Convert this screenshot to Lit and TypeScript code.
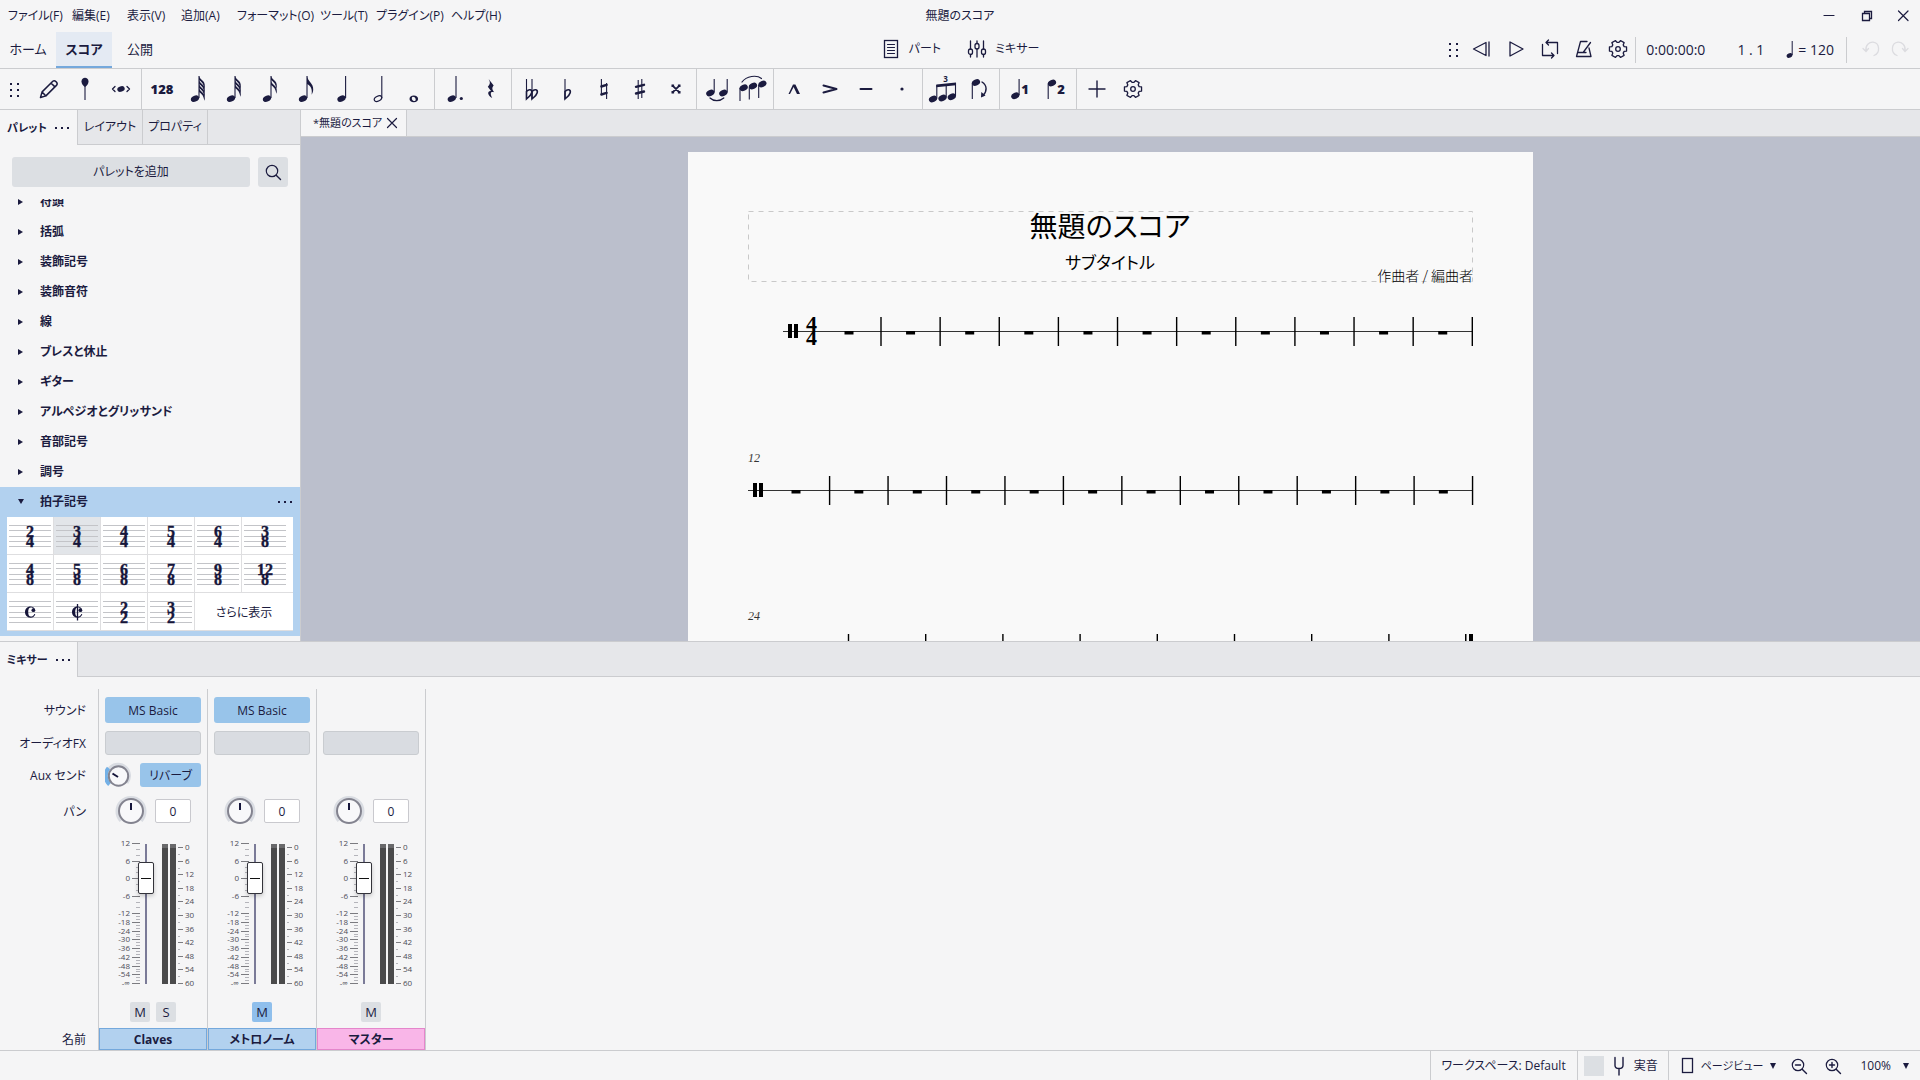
import { LitElement, html, svg, css, nothing } from "lit";
import { customElement } from "lit/decorators.js";
import { classMap } from "lit/directives/class-map.js";

const icon = (body: unknown, size = 32, view = size) =>
  html`<svg class="icon" width=${size} height=${size} viewBox="0 0 ${view} ${view}" aria-hidden="true">${body}</svg>`;

const head = (x: number, y: number) =>
  svg`<ellipse cx=${x} cy=${y} rx="4.3" ry="3" transform="rotate(-25 ${x} ${y})" fill="currentColor"/>`;
const stem = (x: number, y1: number, y2: number) =>
  svg`<path d="M${x} ${y1}V${y2}" stroke="currentColor" stroke-width="1.1"/>`;
const line = (d: string, w = 1.3) =>
  svg`<path d=${d} fill="none" stroke="currentColor" stroke-width=${w} stroke-linejoin="round" stroke-linecap="round"/>`;
const fill = (d: string) => svg`<path d=${d} fill="currentColor"/>`;

const flagged = (count: number) => svg`${head(13, 25.6)}${stem(17, 3, 25)}${
  count === 1
    ? fill("M17 3c.6 5 6.6 7.500 6.200 13.500c0 2-.6 3.600-1.600 5.200c.9-5.600-.6-8.700-4.600-10.700z")
    : Array.from({ length: count }, (_, i) => {
        const y = 3 + i * (count === 2 ? 5 : 4);
        return fill(`M17 ${y}c1 3.800 6.400 4.400 5.800 10.500c-.1 1-.3 1.600-.6 2.200c-.3-4.600-2.400-6.700-5.200-8.700z`);
      })
}`;

const gearPath = (() => {
  const teeth = 6;
  const points: string[] = [];
  for (let i = 0; i < teeth; i++) {
    const a = (i / teeth) * Math.PI * 2;
    for (const [da, r] of [[-0.38, 6.6], [-0.24, 8.8], [0.24, 8.8], [0.38, 6.6]]) {
      points.push(`${(10 + Math.cos(a + da) * r).toFixed(2)} ${(10 + Math.sin(a + da) * r).toFixed(2)}`);
    }
  }
  return `M${points.join("L")}Z`;
})();
const gear = () => icon(svg`${line(gearPath, 1.3)}<circle cx="10" cy="10" r="2.300" fill="none" stroke="currentColor" stroke-width="1.3"/>`, 20);

const dots = () =>
  icon(svg`${[3, 10].flatMap((x) => [2, 8, 14].map((y) => svg`<rect x=${x} y=${y} width="2" height="2" fill="currentColor"/>`))}`, 16);

const more = () => html`<svg class="more" width="16" height="4" viewBox="0 0 16 4" aria-hidden="true">
  <path d="M1 1h2v2H1zM7 1h2v2H7zM13 1h2v2h-2z" fill="currentColor"/></svg>`;

const flat = (x: number) => svg`${stem(x, 6, 26)}<path d="M${x} 18.500c2.500-3 6-2 5.200 1.300c-.6 2.500-3 4.200-5.200 6.200z" fill="none" stroke="currentColor" stroke-width="1.600"/>`;
const digit = (t: string, x: number) => svg`<text class="digit" x=${x} y="21" text-anchor="middle">${t}</text>`;

type Tool = [string, unknown];
const noteTools: Tool[][] = [
  [
    ["音符入力", svg`${line("M7.500 24.500l1.600-5.600L19.800 8.200c2-1.700 5.500 1.700 3.900 3.900L12.900 22.900zM18 10l3.900 3.900M9.100 18.900l3.800 4M11 17l7-7", 1.5)}`],
    ["音高", svg`${fill("M12.500 8.500c0-5 7-5 7 0c0 2.500-1.700 4.500-3.500 5.500c-1.800-1-3.500-3-3.500-5.500z")}${stem(16, 12, 27)}`],
    ["間隔", svg`<ellipse cx="16" cy="16" rx="3.800" ry="2.700" transform="rotate(-20 16 16)" fill="currentColor"/>${line("M10 13.500L7.500 16l2.500 2.500M22 13.500l2.500 2.500l-2.500 2.500", 1.3)}`],
  ],
  [
    ["128分音符", svg`<text class="digit" x="16" y="21" text-anchor="middle">128</text>`],
    ["64分音符", flagged(4)],
    ["32分音符", flagged(3)],
    ["16分音符", flagged(2)],
    ["8分音符", flagged(1)],
    ["4分音符", svg`${head(15.5, 25.6)}${stem(19.6, 3, 25)}`],
    ["2分音符", svg`<ellipse cx="16" cy="25.600" rx="4" ry="2.400" transform="rotate(-28 16 25.600)" fill="none" stroke="currentColor" stroke-width="1.2"/>${stem(19.8, 3, 25)}`],
    ["全音符", svg`<path fill-rule="evenodd" fill="currentColor" d="M15.800 22.600c2.600 0 4.300 1.500 4.300 3.300s-1.700 3.300-4.300 3.300s-4.300-1.500-4.300-3.300s1.700-3.300 4.300-3.300zM14.900 23.700c-2 .5-1 4.400 1.800 4.400c2-.5 1-4.400-1.800-4.400z"/>`],
  ],
  [
    ["付点", svg`${head(12.8, 25.6)}${stem(17, 3, 25)}<circle cx="22.300" cy="25.500" r="1.600" fill="currentColor"/>`],
    ["休符", fill("M13.600 6L18.700 12.400C16.700 14.800 17 16 19.200 19.300C15.800 18.300 14.600 20 17.200 25C12 22 12.200 17.600 16 17.900L12.800 13.800C15.400 11 15.400 9.300 13.600 6Z")],
  ],
  [
    ["ダブルフラット", svg`${flat(10.5)}${flat(16)}`],
    ["フラット", flat(13)],
    ["ナチュラル", svg`${stem(13.4, 6, 22)}${stem(18.6, 10, 26)}${line("M13.400 13.500l5.200-1.600M13.400 21.500l5.200-1.600", 2.4)}`],
    ["シャープ", svg`${stem(14.2, 7, 26)}${stem(17.8, 6, 25)}${line("M12 13.800l8-2M12 20.500l8-2", 2.4)}`],
    ["ダブルシャープ", svg`${line("M12.800 12.800l6.400 6.400M19.200 12.800l-6.400 6.400", 1.8)}${fill("M11.500 11.500h2.600v2.600h-2.600zM17.900 11.500h2.600v2.600h-2.600zM11.500 17.900h2.600v2.600h-2.600zM17.900 17.900h2.600v2.600h-2.600z")}`],
  ],
  [
    ["タイ", svg`${head(9.3, 20)}${head(22.3, 20)}${stem(13.2, 6, 19.5)}${stem(26.2, 6, 19.500)}${line("M9 25c3.500 3.500 10 3.500 13.800 0", 1.2)}`],
    ["スラー", svg`${head(6.7, 14.8)}${head(16, 13)}${head(25.4, 11)}${stem(3, 15, 28)}${stem(12.300, 14, 26.5)}${stem(21.7, 12, 25)}${line("M5 9c4.500-6 14.500-7.500 19.500-3.500", 1.2)}`],
  ],
  [
    ["マルカート", fill("M10.500 21L15 11.500h2.400L22 21h-3L15.600 14L12 21z")],
    ["アクセント", line("M9.500 12.500L22.500 16L9.500 19.500", 2)],
    ["テヌート", line("M10.500 16h11", 2)],
    ["スタッカート", svg`<circle cx="16" cy="16" r="1.600" fill="currentColor"/>`],
  ],
  [
    ["連符", svg`${head(6, 26)}${head(15.5, 25)}${head(24.8, 23.8)}${stem(9.8, 12, 25.5)}${stem(19.200, 11, 24.5)}${stem(28.500, 10, 23)}${fill("M9.300 11.500L29 9.500v2.800L9.300 14.300z")}<text class="mini" x="18.500" y="8.500" text-anchor="middle">3</text>`],
    ["符幹を反転", svg`${head(13, 9.5)}${stem(9.3, 10, 26)}${line("M19 9c5 3 5.500 9 1 13.500", 1.4)}${fill("M18 24.500l.3-5.500l4.200 3.500z")}`],
  ],
  [
    ["声部1", svg`${head(11.3, 22.8)}${stem(15.1, 6, 22)}${digit("1", 21)}`],
    ["声部2", svg`${head(12, 10)}${stem(8.2, 10.5, 26)}${digit("2", 21)}`],
  ],
];

const topMenus = ["ファイル(F)", "編集(E)", "表示(V)", "追加(A)", "フォーマット(O)", "ツール(T)", "プラグイン(P)", "ヘルプ(H)"];
const palettes = ["符頭", "括弧", "装飾記号", "装飾音符", "線", "ブレスと休止", "ギター", "アルペジオとグリッサンド", "音部記号", "調号"];
const signatures: [string, string][] = [
  ["2", "4"], ["3", "4"], ["4", "4"], ["5", "4"], ["6", "4"], ["3", "8"],
  ["4", "8"], ["5", "8"], ["6", "8"], ["7", "8"], ["9", "8"], ["12", "8"],
  ["C", ""], ["¢", ""], ["2", "2"], ["3", "2"],
];

const signatureCell = ([top, bottom]: [string, string]) => html`
  <svg class="staff" width="46" height="37" viewBox="0 0 46 37" aria-hidden="true">
    ${[8.5, 13.5, 19.500, 24.5, 29.5].map((y) => svg`<path d="M2 ${y}h42" stroke="#c3c4c8"/>`)}
    ${bottom
      ? svg`<text class="sig" x="23" y="19.500" text-anchor="middle">${top}</text><text class="sig" x="23" y="30" text-anchor="middle">${bottom}</text>`
      : svg`<path d="M28 17.300c0-2.300-2.200-3.800-4.500-3.800c-3.500 0-5.500 2.600-5.500 5.600s2 5.600 5.500 5.600c2.600 0 4.300-1.600 4.800-3.700h-.9c-.6 1.500-1.700 2.600-3.500 2.600c-1.800 0-2.700-1.400-2.700-4.500s.9-4.500 2.700-4.500c.8 0 1.400.1 1.900.5z" fill="#15153a"/><circle cx="26.400" cy="17.200" r="1.900" fill="#15153a"/>${top === "¢" ? svg`<path d="M23.500 11v16.500" stroke="#15153a" stroke-width="1.3"/>` : nothing}`}
  </svg>`;

type Strip = { name: string; sound: string; aux: boolean; mute: boolean; solo: boolean; master?: boolean };
const strips: Strip[] = [
  { name: "Claves", sound: "MS Basic", aux: true, mute: false, solo: true },
  { name: "メトロノーム", sound: "MS Basic", aux: false, mute: true, solo: false },
  { name: "マスター", sound: "", aux: false, mute: false, solo: false, master: true },
];

const gainMarks: [string, number][] = [
  ["12", 16], ["6", 34], ["0", 51], ["-6", 69], ["-12", 86], ["-18", 95], ["-24", 104],
  ["-30", 112], ["-36", 121], ["-42", 130], ["-48", 139], ["-54", 147], ["-∞", 156],
];
const gainScale = () => html`<svg class="gain" width="42" height="173" viewBox="0 0 42 173" aria-hidden="true">
  ${gainMarks.map(([label, y], i) => {
    const next = gainMarks[i + 1];
    return svg`<text class="mark" x="31" y=${y + 3} text-anchor="end">${label}</text>
      <path d="M33 ${y + 0.5}h8" stroke="#7b7b80"/>
      ${next ? [1, 2].map((n) => svg`<path d="M37 ${Math.round(y + ((next[1] - y) * n) / 3) + 0.5}h4" stroke="#b4b4ba"/>`) : nothing}`;
  })}
</svg>`;
const levelScale = () => html`<svg class="level" width="45" height="173" viewBox="0 0 45 173" aria-hidden="true">
  <path d="M1 17h6v140H1zM9 17h6v140H9z" fill="#4a4a4b"/>
  <path d="M1 17h6v4H1zM9 17h6v4H9z" fill="#69696b"/>
  ${Array.from({ length: 11 }, (_, i) => {
    const y = Math.round(20 + i * 13.6);
    return svg`<path d="M17 ${y + 0.5}h5" stroke="#7b7b80"/><text class="mark" x="24" y=${y + 3}>${i * 6}</text>
      ${i < 10 ? svg`<path d="M17 ${y + 7.5}h2" stroke="#b4b4ba"/>` : nothing}`;
  })}
</svg>`;

const panKnob = () => html`<svg width="32" height="32" viewBox="0 0 32 32" aria-hidden="true">
  <path d="M5.800 26A14 14 0 1 1 26.200 26" fill="none" stroke="#d9dce2" stroke-width="3"/>
  <circle cx="16" cy="16" r="12" fill="#f8f8fa" stroke="#83838f" stroke-width="2"/>
  <path d="M16 8v7" stroke="#15153a" stroke-width="2"/></svg>`;
const auxKnob = () => html`<svg width="26" height="26" viewBox="0 0 26 26" aria-hidden="true">
  <path d="M4 21A11.500 11.500 0 1 1 22 21" fill="none" stroke="#d9dce2" stroke-width="3"/>
  <path d="M4.500 22.500A12 12 0 0 1 3.500 6" fill="none" stroke="#73b0e6" stroke-width="4"/>
  <circle cx="13.500" cy="14" r="9.700" fill="#f8f8fa" stroke="#83838f" stroke-width="2"/>
  <path d="M7.500 11.500l5.500 3.500" stroke="#15153a" stroke-width="2"/></svg>`;

@customElement("score-page")
export class ScorePage extends LitElement {
  static styles = css`
    :host { display: block; flex: none; background: #f9f9f9; width: 845px; }
    svg { display: block; }
    text { fill: #000; font-family: "Noto Sans CJK JP", sans-serif; font-feature-settings: "palt"; }
    .title { font-size: 28px; }
    .subtitle { font-size: 17px; }
    .composer { font-size: 14px; font-weight: 300; }
    .measure { font: italic 12px "Liberation Serif", serif; fill: #333; }
    .time { font: bold 22px "Liberation Serif", serif; }
  `;

  private system(y: number, start: number, first: number, step: number, count: number, firstRest: number) {
    return svg`
      <path d="M${start} ${y + 0.5}H785" stroke="#333"/>
      <path d="M${start + 5} ${y - 7}h4v14h-4zM${start + 11} ${y - 7}h4v14h-4z"/>
      ${Array.from({ length: count }, (_, i) => {
        const x = first + i * step;
        return svg`<rect x=${x - 0.7} y=${y - 14} width="1.400" height="29"/>
          <rect x=${(i ? x - step / 2 : firstRest) - 4.5} y=${y} width="9" height="3.500"/>`;
      })}`;
  }

  render() {
    return html`<svg width="845" height="489" viewBox="0 0 845 489">
      <rect x="60.500" y="59.500" width="724" height="70" fill="none" stroke="#c9c9c9" stroke-dasharray="5 5"/>
      <text class="title" x="422" y="85" text-anchor="middle">無題のスコア</text>
      <text class="subtitle" x="422" y="117" text-anchor="middle">サブタイトル</text>
      <text class="composer" x="785" y="129" text-anchor="end">作曲者 / 編曲者</text>
      ${this.system(179, 95, 193, 59.13, 11, 161)}
      <text class="time" x="123.500" y="179" text-anchor="middle">4</text>
      <text class="time" x="123.500" y="193" text-anchor="middle">4</text>
      <text class="measure" x="60" y="310">12</text>
      ${this.system(338, 60, 141.6, 58.45, 12, 108)}
      <text class="measure" x="60" y="468">24</text>
      ${Array.from({ length: 8 }, (_, i) => svg`<rect x=${159.8 + i * 77.2} y="482" width="1.400" height="28"/>`)}
      <path d="M777 482h1.500v28h-1.500zM781 482h4v28h-4z"/>
    </svg>`;
  }
}

@customElement("app-root")
export class AppRoot extends LitElement {
  static styles = css`
    :host {
      display: flex; flex-direction: column; height: 100vh; overflow: hidden;
      background: #f5f5f6; color: #1b1b3f;
      font: 12px/18px "Open Sans", "Noto Sans CJK JP", sans-serif;
      font-feature-settings: "palt";
    }
    * { box-sizing: border-box; }
    button, input { font: inherit; color: inherit; margin: 0; padding: 0; border: 0; background: none; font-feature-settings: inherit; }
    button { display: flex; align-items: center; justify-content: center; white-space: nowrap; }
    svg { display: block; flex: none; }
    a { color: inherit; text-decoration: none; }

    .titlebar { display: grid; grid-template-columns: 1fr auto 1fr; height: 32px; align-items: center; }
    .menus { display: grid; grid-template-columns: 64px 55px 54px 56px 83px 56px 75px auto; justify-content: start; padding-left: 8px; }
    .menus button { justify-content: flex-start; }
    .window { display: flex; justify-content: flex-end; }
    .window button { width: 38px; height: 30px; }
    .window button:last-child { width: 34px; }

    .mainbar { display: grid; grid-template-columns: 1fr auto 1fr; height: 37px; border-bottom: 1px solid #cbcccf; align-items: stretch; }
    .pages, .views, .transport { display: flex; align-items: center; }
    .pages a { display: flex; width: 56px; height: 36px; align-items: center; justify-content: center; font-size: 13px; padding-bottom: 2px; }
    .pages .current { background: #e4eaf3; border-bottom: 2px solid #74a8dc; padding: 0; font-weight: 700; }
    .views { gap: 26px; padding-bottom: 2px; }
    .views button { gap: 8px; }
    .transport { justify-content: flex-end; font-size: 14px; }
    .transport .icon { margin-bottom: 2px; }
    .transport > .icon { margin-right: 3px; }
    .transport button { width: 34px; height: 32px; }
    .transport .undo button { width: 29px; }
    .undo { display: flex; color: #dcdce0; padding: 0 6px 0 9px; }
    .rule { width: 1px; height: 26px; background: #cbcccf; }
    .time { margin: 0 32px 0 10px; }
    .beat { margin-right: 22px; }
    .tempo { display: flex; align-items: center; gap: 3px; margin-right: 12px; }

    .notebar { display: flex; height: 41px; border-bottom: 1px solid #cbcccf; align-items: stretch; }
    .grip { display: flex; width: 29px; align-items: center; justify-content: center; }
    .group { display: flex; align-items: center; padding: 0 2px; border-right: 1px solid #cbcccf; }
    .group:last-child { border-right: 0; }
    .group button { width: 36px; height: 36px; }
    .digit { font: 800 13px "Open Sans", sans-serif; fill: currentColor; }
    .mini { font: 700 8px "Open Sans", sans-serif; fill: currentColor; }
    .icon { overflow: visible; }

    .work { display: flex; flex: 1; min-height: 0; }
    .side { display: flex; flex-direction: column; width: 301px; border-right: 1px solid #cbcccf; flex: none; }
    .tabs { display: flex; height: 35px; background: #e6e7ea; flex: none; }
    .tabs button { width: 65px; border-right: 1px solid #cbcccf; border-bottom: 1px solid #cbcccf; }
    .tabs .active { width: 78px; gap: 7px; background: #f5f5f6; border-bottom: 0; font-weight: 700; font-size: 11px; }
    .tabs .rest { flex: 1; border-bottom: 1px solid #cbcccf; }
    .finder { display: flex; gap: 8px; padding: 12px; height: 54px; flex: none; }
    .finder button { height: 30px; background: #dcdfe3; border-radius: 3px; }
    .finder .add { flex: 1; }
    .finder .search { width: 30px; }
    .list { display: flex; flex-direction: column; justify-content: flex-end; flex: 1; min-height: 0; overflow: hidden; padding-bottom: 5px; }
    .list > * { flex: none; }
    .palette { display: flex; width: 100%; height: 30px; justify-content: flex-start; padding: 0 8px 0 18px; gap: 17px; font-weight: 700; }
    .palette .more { margin-left: auto; }
    .open { background: #b2d1ef; padding: 0 7px 5px 7px; }
    .open .palette { padding: 0 0 0 11px; }
    .cells { display: grid; grid-template-columns: repeat(5, 47px) 1fr; background: #fff; }
    .cells button { height: 38px; justify-content: flex-start; border-right: 1px solid #dedee0; border-bottom: 1px solid #dedee0; }
    .cells button:nth-child(6n) { border-right: 0; }
    .cells .picked { background: #e2e5e9; }
    .cells .show { grid-column: span 2; justify-content: center; border-right: 0; padding-top: 3px; }
    .sig { font: bold 16px "Liberation Serif", serif; fill: #15153a; stroke: #15153a; stroke-width: 0.4; }

    .main { display: flex; flex-direction: column; flex: 1; min-width: 0; }
    .docs { display: flex; height: 27px; background: #e6e7ea; border-bottom: 1px solid #cbcccf; flex: none; }
    .doc { display: flex; align-items: center; gap: 2px; padding: 0 6px 0 12px; background: #f5f5f6; border-right: 1px solid #cbcccf; font-size: 11px; }
    .canvas { display: flex; justify-content: center; flex: 1; min-height: 0; overflow: hidden; padding-top: 15px; background: #bbbfcc; }

    .mixer { flex: none; border-top: 1px solid #cbcccf; }
    .strips { display: flex; padding-top: 12px; }
    .strip { display: grid; grid-template-rows: 42px 24px 40px 32px 173px 28px 22px; width: 109px; border-left: 1px solid #cbcccf; }
    .strip:last-child { width: 110px; border-right: 1px solid #cbcccf; }
    .heads { width: 98px; border: 0; text-align: right; padding-right: 12px; align-items: center; }
    .heads span { padding-top: 2px; }
    .heads .last { grid-row: 7; }
    .cell { display: flex; align-items: center; justify-content: space-between; padding: 0 6px; min-width: 0; }
    .cell.end { align-items: flex-start; justify-content: center; gap: 6px; padding-top: 2px; }
    .sound { width: 100%; height: 26px; background: #98c4ea; border-radius: 3px; padding-top: 2px; }
    .fx { width: 100%; height: 24px; background: #d9dce1; border: 1px solid #c9ccd0; border-radius: 3px; }
    .aux { width: 61px; height: 24px; background: #98c4ea; border-radius: 3px; padding-top: 2px; }
    .knob { position: relative; display: block; }
    .knob input { position: absolute; inset: 0; width: 100%; height: 100%; opacity: 0; }
    .cell.pan { justify-content: center; gap: 8px; padding: 0 14px; }
    .value { width: 36px; height: 24px; background: #fff; border: 1px solid #c9c9ce; border-radius: 2px; text-align: center; }
    .faders { display: flex; min-width: 0; }
    .fader {
      appearance: none; writing-mode: vertical-lr; direction: rtl; width: 16px; height: 173px; margin: 0 7px 0 -3px; flex: none;
      background: linear-gradient(#7b7b98, #7b7b98) center / 2px 140px no-repeat;
    }
    .fader::-webkit-slider-thumb {
      appearance: none; width: 16px; height: 32px; border: 1px solid #33333a; border-radius: 2px; box-shadow: 0 2px 4px #0003;
      background: linear-gradient(#111, #111) center / 10px 1px no-repeat, #fff;
    }
    .mark { font: 8px "Open Sans", sans-serif; fill: #4c4c56; }
    .toggle { width: 20px; height: 20px; background: #dcdfe3; border-radius: 2px; font-size: 13px; }
    .toggle.on { background: #8fbfec; }
    .name { display: flex; align-items: center; justify-content: center; background: #b2d1ef; border: 1px solid #74a8dc; font-weight: 700; padding-top: 2px; }
    .name.master { background: #f9b6e8; border-color: #e486cb; }

    .status { display: flex; height: 30px; justify-content: flex-end; align-items: stretch; border-top: 1px solid #cbcccf; flex: none; }
    .part { display: flex; align-items: center; border-left: 1px solid #cbcccf; }
    .workspace { padding: 0 11px; }
    .pitch { gap: 9px; padding: 0 10px 0 6px; }
    .swatch { width: 20px; height: 20px; background: #dcdfe3; }
    .zoomers { padding-left: 12px; }
    .zoomers button { height: 28px; }
    .view { gap: 6px; margin-right: 5px; font-size: 11px; }
    .zoom { width: 34px; }
    .percent { gap: 11px; padding: 0 10px; }
  `;

  private down() {
    return html`<svg width="8" height="6" viewBox="0 0 8 6" aria-hidden="true"><path d="M1 0h6L4 6z" fill="currentColor"/></svg>`;
  }

  private titlebar() {
    return html`<header class="titlebar">
      <nav class="menus">${topMenus.map((m) => html`<button>${m}</button>`)}</nav>
      <span>無題のスコア</span>
      <div class="window">
        <button aria-label="最小化">${icon(line("M3 7.500h10", 1.2), 16)}</button>
        <button aria-label="元に戻す">${icon(svg`<path d="M3.500 5.500h7v7h-7zM5.500 5.500v-2h7v7h-2" fill="none" stroke="currentColor" stroke-width="1.300"/>`, 16)}</button>
        <button aria-label="閉じる">${icon(line("M3.500 3l9.500 9.500M13 3L3.500 12.500", 1.2), 16)}</button>
      </div>
    </header>`;
  }

  private mainbar() {
    return html`<div class="mainbar">
      <nav class="pages"><a href="#home">ホーム</a><a class="current" href="#score">スコア</a><a href="#publish">公開</a></nav>
      <div class="views">
        <button>${icon(svg`<rect x="3.500" y="1.500" width="13" height="17" fill="none" stroke="currentColor" stroke-width="1.300"/>${line("M6.500 5.500h7M6.500 8.500h7M6.500 11.500h7M6.500 14.500h7", 1.2)}`, 20)}パート</button>
        <button>${icon(svg`${line("M3.500 2v8M3.500 15.500V18M10 2v2.500M10 10v8M16.500 2v8M16.500 15.500V18", 1.3)}<rect x="1.500" y="10" width="4" height="5.500" rx="2" fill="none" stroke="currentColor" stroke-width="1.300"/><rect x="8" y="4.500" width="4" height="5.500" rx="2" fill="none" stroke="currentColor" stroke-width="1.300"/><rect x="14.500" y="10" width="4" height="5.500" rx="2" fill="none" stroke="currentColor" stroke-width="1.300"/>`, 20)}ミキサー</button>
      </div>
      <div class="transport">
        ${dots()}
        <button aria-label="先頭に戻る">${icon(line("M14 3.500v13L1.500 10zM17 3v14"), 20)}</button>
        <button aria-label="再生">${icon(line("M4 3l13 7L4 17z"), 20)}</button>
        <button aria-label="ループ">${icon(line("M6 3.500H17.500V14.500M14 16.500H2.500V5.500M8.500 1L6 3.500L8.500 6M11.500 14l2.500 2.500L11.500 19"), 20)}</button>
        <button aria-label="メトロノーム">${icon(line("M13 2.500H6.500L2.500 17.500h14.500L15 9M9.500 13L16.500 3.500M4 13.500h8"), 20)}</button>
        <button aria-label="再生設定">${gear()}</button>
        <span class="rule"></span>
        <span class="time">0:00:00:0</span>
        <span class="beat">1 . 1</span>
        <span class="tempo"><svg width="9" height="20" viewBox="0 0 9 20" aria-hidden="true"><ellipse cx="3.500" cy="15.500" rx="3" ry="2.200" transform="rotate(-25 3.500 15.500)" fill="currentColor"/><path d="M6.200 1v14" stroke="currentColor"/></svg>= 120</span>
        <span class="rule"></span>
        <div class="undo">
          <button aria-label="元に戻す" disabled>${icon(line("M2 9.500l3 3l2.500-3M5 12C4 6 8.500 3 12 3.200C19 4 19.500 14 13 16.500"), 20)}</button>
          <button aria-label="やり直す" disabled>${icon(line("M18 9.500l-3 3l-2.500-3M15 12C16 6 11.500 3 8 3.200C1 4 .5 14 7 16.500"), 20)}</button>
        </div>
      </div>
    </div>`;
  }

  private notebar() {
    return html`<div class="notebar" role="toolbar">
      <span class="grip">${dots()}</span>
      ${noteTools.map((group) => html`<div class="group">${group.map(([label, art]) => html`<button aria-label=${label}>${icon(art)}</button>`)}</div>`)}
      <div class="group">
        <button aria-label="追加">${icon(line("M16 8v16M8 16h16", 1.4))}</button>
        <button aria-label="ツールバー設定">${gear()}</button>
      </div>
    </div>`;
  }

  private side() {
    return html`<aside class="side">
      <div class="tabs">
        <button class="active">パレット${more()}</button><button>レイアウト</button><button>プロパティ</button><span class="rest"></span>
      </div>
      <div class="finder">
        <button class="add">パレットを追加</button>
        <button class="search" aria-label="検索">${icon(svg`<circle cx="7" cy="7" r="5.700" fill="none" stroke="currentColor" stroke-width="1.200"/>${line("M11.200 11.200L15.500 15.500", 1.4)}`, 16)}</button>
      </div>
      <div class="list">
        ${palettes.map((p) => html`<button class="palette"><svg width="5" height="6" viewBox="0 0 5 6" aria-hidden="true"><path d="M0 0v6l5-3z" fill="currentColor"/></svg>${p}</button>`)}
        <section class="open">
          <button class="palette"><svg width="5" height="6" viewBox="0 0 5 6" overflow="visible" aria-hidden="true"><path d="M0 0h6L3 5z" fill="currentColor"/></svg>拍子記号${more()}</button>
          <div class="cells">
            ${signatures.map((s, i) => html`<button class=${classMap({ picked: i === 1 })} aria-label=${s[1] ? `${s[0]}/${s[1]}` : s[0]}>${signatureCell(s)}</button>`)}
            <button class="show">さらに表示</button>
          </div>
        </section>
      </div>
    </aside>`;
  }

  private strip(s: Strip) {
    return html`<section class="strip">
      <div class="cell">${s.sound ? html`<button class="sound">${s.sound}</button>` : nothing}</div>
      <div class="cell"><button class="fx" aria-label="オーディオFX"></button></div>
      <div class="cell">${s.aux
        ? html`<label class="knob">${auxKnob()}<input type="range" aria-label="リバーブ量" value="25"></label><button class="aux">リバーブ</button>`
        : nothing}</div>
      <div class="cell pan">
        <label class="knob">${panKnob()}<input type="range" aria-label="パン" min="-100" value="0"></label>
        <input class="value" aria-label="パンの値" value="0">
      </div>
      <div class="faders">${gainScale()}<input class="fader" type="range" aria-label="音量" value="75">${levelScale()}</div>
      <div class="cell end">
        <button class=${classMap({ toggle: true, on: s.mute })}>M</button>
        ${s.solo ? html`<button class="toggle">S</button>` : nothing}
      </div>
      <div class=${classMap({ name: true, master: !!s.master })}>${s.name}</div>
    </section>`;
  }

  private status() {
    return html`<footer class="status">
      <button class="part workspace">ワークスペース: Default</button>
      <button class="part pitch"><span class="swatch"></span><svg width="12" height="20" viewBox="0 0 12 20" aria-hidden="true">${line("M2 1.500v8c0 4 8 4 8 0v-8M6 12.500V19", 1.4)}</svg>実音</button>
      <div class="part zoomers">
        <button class="view"><svg width="14" height="18" viewBox="0 0 14 18" aria-hidden="true"><rect x="1.500" y="1.500" width="10" height="14" fill="none" stroke="currentColor" stroke-width="1.300"/></svg>ページビュー${this.down()}</button>
        <button class="zoom" aria-label="縮小">${icon(svg`<circle cx="7" cy="7" r="5.700" fill="none" stroke="currentColor" stroke-width="1.200"/>${line("M11.200 11.200L15.500 15.500M4.500 7h5", 1.4)}`, 16)}</button>
        <button class="zoom" aria-label="拡大">${icon(svg`<circle cx="7" cy="7" r="5.700" fill="none" stroke="currentColor" stroke-width="1.200"/>${line("M11.200 11.200L15.500 15.500M4.500 7h5M7 4.500v5", 1.4)}`, 16)}</button>
        <button class="percent">100%${this.down()}</button>
      </div>
    </footer>`;
  }

  render() {
    return html`
      ${this.titlebar()}${this.mainbar()}${this.notebar()}
      <div class="work">
        ${this.side()}
        <main class="main">
          <div class="docs"><div class="doc">*無題のスコア<button aria-label="閉じる">${icon(line("M3.500 3.500l9 9M12.500 3.500l-9 9", 1.2), 16)}</button></div></div>
          <div class="canvas"><score-page></score-page></div>
        </main>
      </div>
      <section class="mixer">
        <div class="tabs"><button class="active">ミキサー${more()}</button><span class="rest"></span></div>
        <div class="strips">
          <div class="strip heads"><span>サウンド</span><span>オーディオFX</span><span>Aux センド</span><span>パン</span><span class="last">名前</span></div>
          ${strips.map((s) => this.strip(s))}
        </div>
      </section>
      ${this.status()}`;
  }
}
